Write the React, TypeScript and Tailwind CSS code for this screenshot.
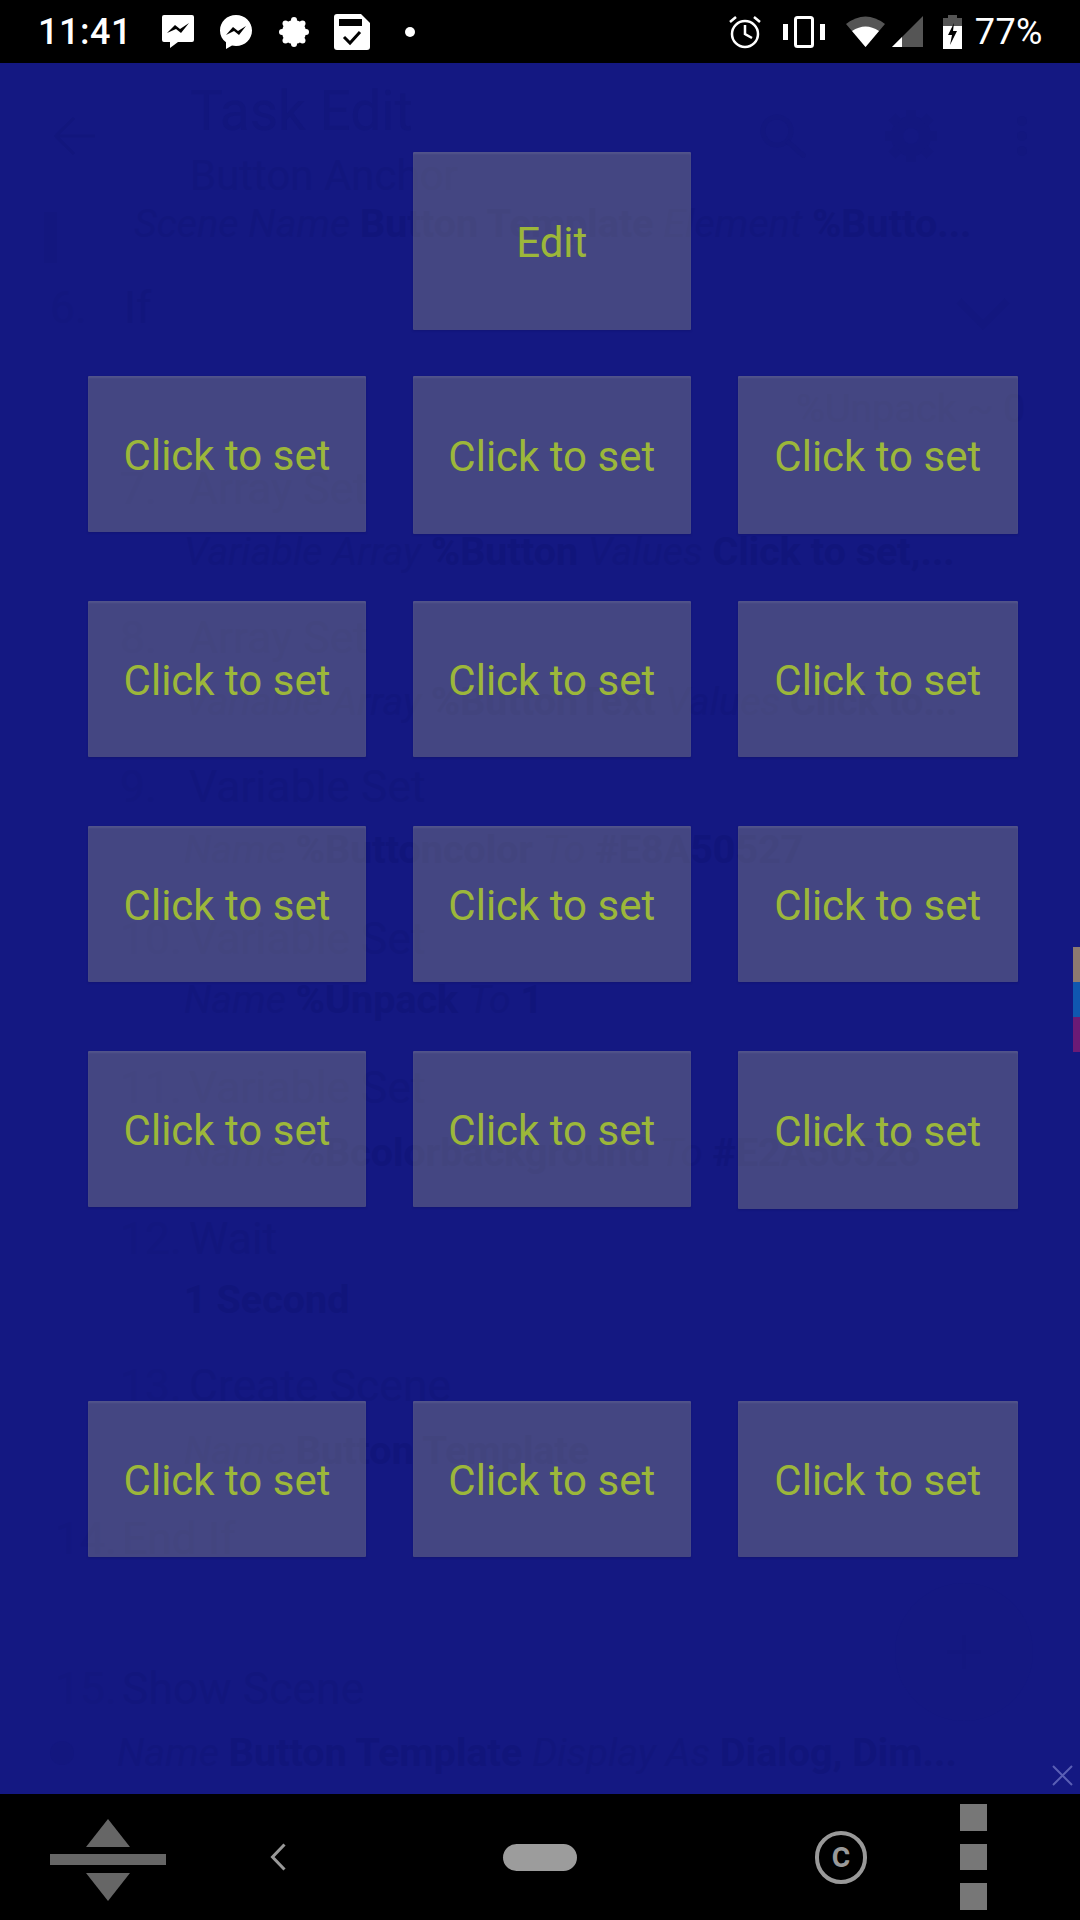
import React from "react";

const GR = "text-[#12167d]";
const Ghost = ({ children, className = "" }: { children: React.ReactNode; className?: string }) => (
  <div className={`h-10 leading-10 whitespace-nowrap flex ${className}`}>{children}</div>
);
const I = ({ children }: { children: React.ReactNode }) => <span className="italic whitespace-pre">{children}</span>;
const B = ({ children }: { children: React.ReactNode }) => <span className="font-bold text-[#11157b] whitespace-pre">{children}</span>;
const Title = ({ n, t, className = "" }: { n: string; t: string; className?: string }) => (
  <Ghost className={`text-[44.5px] pl-[120px] ${className}`}>
    <span className="w-[69px] text-[#13177f]">{n}</span>
    <span>{t}</span>
  </Ghost>
);
const Detail = ({ children, className = "" }: { children: React.ReactNode; className?: string }) => (
  <Ghost className={`text-[39.5px] pl-[184px] ${className}`}>{children}</Ghost>
);

const Btn = ({ className = "h-[156px]", label = "Click to set" }: { className?: string; label?: string }) => (
  <div className={`flex items-center justify-center pt-[3px] bg-[#82828270] shadow-[inset_0_2px_2px_#ffffff14,0_1px_2px_#0a0c5040] rounded-[1px] text-[42px] text-[#9cb73a] ${className}`}>
    {label}
  </div>
);
const Row = ({ className = "", tall = false }: { className?: string; tall?: boolean }) => (
  <div className={`grid grid-cols-[278px_278.5px_280.5px] gap-x-[46.5px] items-start ${className}`}>
    <Btn />
    <Btn className={tall ? "h-[158px]" : "h-[156px]"} />
    <Btn className={tall ? "h-[158px]" : "h-[156px]"} />
  </div>
);

export default function App() {
  return (
    <div className="w-[1080px] h-[1920px] flex flex-col bg-black font-[Roboto,sans-serif] overflow-hidden">
      {/* status bar */}
      <div className="h-[63px] shrink-0 bg-black flex items-center text-white">
        <span className="ml-[38px] w-[124px] text-[36px] font-medium tracking-[0.5px]">11:41</span>
        <svg width="32" height="33" viewBox="0 0 32 33">
          <path d="M2 0H30a2 2 0 0 1 2 2V25a2 2 0 0 1-2 2H16L8 33V27H2a2 2 0 0 1-2-2V2a2 2 0 0 1 2-2Z" fill="#fff" />
          <path d="M5 18L13 10L18 14L27 8L19 18L14 14Z" fill="#000" />
        </svg>
        <svg className="ml-[26px]" width="32" height="34" viewBox="0 0 32 34">
          <path d="M16 0C7 0 0 6.800 0 15.500C0 20.400 2.200 24.500 6 27.300V34L12 30.500C13.300 30.800 14.600 31 16 31C25 31 32 24.200 32 15.500C32 6.800 25 0 16 0Z" fill="#fff" />
          <path d="M6 20L13 12L18 16L26 11L19 20L14 16Z" fill="#000" />
        </svg>
        <svg className="ml-[27px]" width="30" height="30" viewBox="0 0 30 30">
          <circle cx="15" cy="15" r="12" fill="#fff" />
          <circle cx="15" cy="3" r="3" fill="#fff" />
          <circle cx="15" cy="27" r="3" fill="#fff" />
          <circle cx="3" cy="15" r="3" fill="#fff" />
          <circle cx="27" cy="15" r="3" fill="#fff" />
          <circle cx="6.500" cy="6.500" r="3" fill="#fff" />
          <circle cx="23.500" cy="6.500" r="3" fill="#fff" />
          <circle cx="6.500" cy="23.500" r="3" fill="#fff" />
          <circle cx="23.500" cy="23.500" r="3" fill="#fff" />
        </svg>
        <svg className="ml-[25px]" width="36" height="36" viewBox="0 0 36 36">
          <path d="M3 0H27L36 9V33a3 3 0 0 1-3 3H3a3 3 0 0 1-3-3V3a3 3 0 0 1 3-3Z" fill="#fff" />
          <rect x="5" y="5" width="23" height="7" fill="#000" />
          <path d="M10 23L16 29L26 18" fill="none" stroke="#000" strokeWidth="3" />
        </svg>
        <span className="ml-[35px] w-[10px] h-[10px] rounded-full bg-white" />
        <svg className="ml-auto" width="32" height="34" viewBox="0 0 32 34">
          <circle cx="16" cy="19" r="13" fill="none" stroke="#fff" strokeWidth="2.500" />
          <path d="M16 10V19L23 23" fill="none" stroke="#fff" strokeWidth="2.500" />
          <path d="M1 7L7 2M31 7L25 2" fill="none" stroke="#fff" strokeWidth="2.500" />
        </svg>
        <svg className="ml-[22px]" width="42" height="32" viewBox="0 0 42 32">
          <rect x="0" y="8" width="5" height="16" fill="#fff" />
          <rect x="37" y="8" width="5" height="16" fill="#fff" />
          <rect x="12.500" y="1.500" width="17" height="29" rx="2" fill="none" stroke="#fff" strokeWidth="3" />
        </svg>
        <svg className="ml-[21px]" width="39" height="31" viewBox="0 0 39 31">
          <path d="M19.500 31L0 8Q19.500 -7 39 8Z" fill="#555" />
          <path d="M19.500 31L6 15Q19.500 6 33 15Z" fill="#fff" />
        </svg>
        <svg className="ml-[7px]" width="31" height="31" viewBox="0 0 31 31">
          <path d="M31 0V31H0Z" fill="#555" />
          <path d="M10 21V31H0Z" fill="#fff" />
        </svg>
        <svg className="ml-[20px]" width="19" height="34" viewBox="0 0 19 34">
          <path d="M5 0H14V3H19V34H0V3H5Z" fill="#555" />
          <path d="M0 11H19V34H0Z" fill="#fff" />
          <path d="M11 8L5 20H9L7 30L14 16H10Z" fill="#000" />
        </svg>
        <span className="ml-[13px] mr-[37px] text-[36px] tracking-[0.5px]">77%</span>
      </div>

      {/* screen */}
      <div className="relative flex-1 bg-[#141882] overflow-hidden">
        {/* dimmed task editor behind the overlay */}
        <div className={`flex flex-col ${GR}`}>
          <div className="h-[146px] flex items-center pl-[53px] pr-[53px]">
            <svg width="42" height="40" viewBox="0 0 42 40">
              <path d="M42 20H3M21 2L3 20L21 38" fill="none" stroke="currentColor" strokeWidth="3" />
            </svg>
            <div className="ml-[95px] self-start pt-[28px]">
              <Ghost className="text-[55px]">Task Edit</Ghost>
              <Ghost className="text-[42px] mt-[25px]">Button Anchor</Ghost>
            </div>
            <svg className="ml-auto" width="46" height="44" viewBox="0 0 46 44">
              <circle cx="17" cy="17" r="14" fill="none" stroke="#13177f" strokeWidth="5" />
              <path d="M27 27L45 43" stroke="#13177f" strokeWidth="5" />
            </svg>
            <svg className="ml-[79px]" width="52" height="52" viewBox="0 0 52 52">
              <circle cx="26" cy="26" r="14" fill="none" stroke="#13177f" strokeWidth="12" />
              <path d="M26 0V8M26 44V52M0 26H8M44 26H52M7 7L13 13M45 7L39 13M7 45L13 39M45 45L39 39" stroke="#13177f" strokeWidth="10" />
            </svg>
            <svg className="ml-[80px]" width="10" height="40" viewBox="0 0 10 40">
              <circle cx="5" cy="5" r="5" fill="#13177f" />
              <circle cx="5" cy="20" r="5" fill="#13177f" />
              <circle cx="5" cy="35" r="5" fill="#13177f" />
            </svg>
          </div>
          <div className="flex items-start h-10 mt-[-5px] pl-[44px]">
            <span className="w-[13px] h-[51px] mt-[8px] bg-[#13177f] shrink-0" />
            <Ghost className="text-[39.5px] ml-[77px]">
              <I>Scene Name </I><B>Button Template </B><I>Element </I><B>%Butto...</B>
            </Ghost>
          </div>
          <Ghost className="text-[44.5px] mt-[44px] pl-[50px]">
            <span className="w-[74px] text-[#13177f]">6.</span>
            <span>If</span>
            <svg className="ml-auto mr-[70px] mt-[10px]" width="54" height="32" viewBox="0 0 54 32">
              <path d="M3 3L27 27L51 3" fill="none" stroke="#13177f" strokeWidth="7" />
            </svg>
          </Ghost>
          <Ghost className="text-[39.5px] mt-[61px] pl-[796px]">%Unpack ~ 0</Ghost>
          <Title n="7." t="Array Set" className="mt-[40px]" />
          <Detail className="mt-[23px]">
            <I>Variable Array </I><B>%Button </B><I>Values </I><B>Click to set,...</B>
          </Detail>
          <Title n="8." t="Array Set" className="mt-[46px]" />
          <Detail className="mt-[24px]">
            <I>Variable Array </I><B>%ButtonText </B><I>Values </I><B>Click to...</B>
          </Detail>
          <Title n="9." t="Variable Set" className="mt-[45px]" />
          <Detail className="mt-[23px]">
            <I>Name </I><B>%Buttoncolor </B><I>To </I><B>#E8A50527</B>
          </Detail>
          <Title n="10." t="Variable Set" className="mt-[49px]" />
          <Detail className="mt-[21px]">
            <I>Name </I><B>%Unpack </B><I>To </I><B>1</B>
          </Detail>
          <Title n="11." t="Variable Set" className="mt-[48px]" />
          <Detail className="mt-[25px]">
            <I>Name </I><B>%Bcolorbackground </B><I>To </I><B>#E2A50526</B>
          </Detail>
          <Title n="12." t="Wait" className="mt-[46px]" />
          <Detail className="mt-[21px]"><B>1 Second</B></Detail>
          <Title n="13." t="Create Scene" className="mt-[46px]" />
          <Detail className="mt-[25px]">
            <I>Name </I><B>Button Template</B>
          </Detail>
          <Ghost className="text-[44.5px] mt-[48px] pl-[55px]">
            <span className="w-[67px] text-[#13177f]">14.</span>
            <span>End If</span>
          </Ghost>
          <Ghost className="text-[44.5px] mt-[110px] pl-[55px]">
            <span className="w-[67px] text-[#13177f]">15.</span>
            <span>Show Scene</span>
          </Ghost>
          <Ghost className="text-[39.5px] mt-[24px] pl-[50px]">
            <span className="w-[24px] h-[24px] mt-[8px] mr-[43px] rounded-full bg-[#13177f]" />
            <I>Name </I><B>Button Template </B><I>Display As </I><B>Dialog, Dim...</B>
          </Ghost>
        </div>

        {/* floating add button of the dimmed editor */}
        <div className="absolute left-[895px] top-[1520px] w-[138px] h-[138px] rounded-full bg-[#141881] flex items-center justify-center">
          <svg width="34" height="34" viewBox="0 0 34 34">
            <path d="M17 0V34M0 17H34" stroke="#13177f" strokeWidth="3" />
          </svg>
        </div>

        {/* button overlay */}
        <div className="absolute inset-0 pl-[88px] pt-[89px]">
          <div className="pl-[324.5px]">
            <Btn className="w-[278.5px] h-[178px]" label="Edit" />
          </div>
          <Row className="mt-[46px]" tall />
          <Row className="mt-[67px]" />
          <Row className="mt-[69px]" />
          <div className="mt-[69px] grid grid-cols-[278px_278.5px_280.5px] gap-x-[46.5px] items-start">
            <Btn />
            <Btn />
            <Btn className="h-[158px]" />
          </div>
          <Row className="mt-[192px]" />
        </div>

        {/* edge colour strip */}
        <div className="absolute right-0 top-[884px] w-[7px] flex flex-col">
          <div className="h-[35px] bg-[#8d7a70]" />
          <div className="h-[35px] bg-[#0f57b0]" />
          <div className="h-[35px] bg-[#6b1a75]" />
        </div>

        {/* close */}
        <svg className="absolute right-[7px] bottom-[8px]" width="21" height="21" viewBox="0 0 21 21">
          <path d="M1 1L20 20M20 1L1 20" stroke="#5a5fb5" strokeWidth="2" />
        </svg>
      </div>

      {/* navigation bar */}
      <div className="h-[126px] shrink-0 bg-black flex items-center">
        <svg className="ml-[50px] mt-[6px]" width="116" height="82" viewBox="0 0 116 82">
          <path d="M58 0L80 28H36Z" fill="#666" />
          <rect x="0" y="35" width="116" height="11" fill="#666" />
          <path d="M36 54H80L58 82Z" fill="#666" />
        </svg>
        <svg className="ml-[104px]" width="16" height="28" viewBox="0 0 16 28">
          <path d="M14.500 1.500L2.500 14L14.500 26.500" fill="none" stroke="#999" strokeWidth="3" />
        </svg>
        <div className="ml-[217px] w-[74px] h-[27px] rounded-[13.5px] bg-[#9c9c9c]" />
        <div className="ml-[238px] w-[52px] h-[53px] rounded-full border-[4.5px] border-[#999] flex items-center justify-center font-medium text-[36px] leading-none pb-[4px] text-[#999]">
          c
        </div>
        <div className="ml-[93px] flex flex-col gap-[13px]">
          <div className="w-[27px] h-[27px] bg-[#777]" />
          <div className="w-[27px] h-[26px] bg-[#777]" />
          <div className="w-[27px] h-[27px] bg-[#777]" />
        </div>
      </div>
    </div>
  );
}
